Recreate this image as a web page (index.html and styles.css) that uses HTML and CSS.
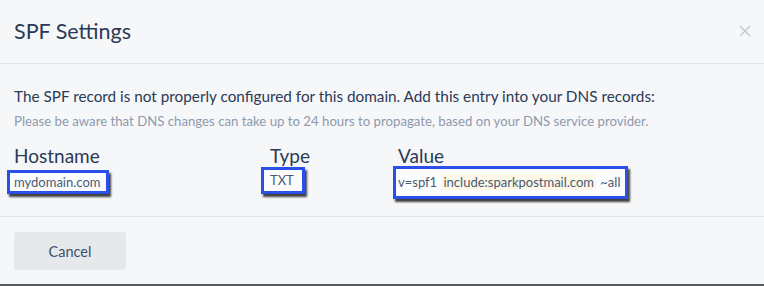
FILE: index.html
```html
<!DOCTYPE html>
<html lang="en">
<head>
    <meta charset="UTF-8">
    <title>SPF Settings</title>
    <link rel="stylesheet" href="styles.css">
</head>
<body>
    <div class="modal">
        <div class="modal-header">
            <h2>SPF Settings</h2>
            <svg class="close" width="12" height="12" viewBox="0 0 12 12">
                <path d="M1 1 L11 11 M11 1 L1 11" stroke="#c3c7cd" stroke-width="1.4" fill="none"/>
            </svg>
        </div>

        <div class="modal-body">
            <p class="intro">The SPF record is not properly configured for this domain. Add this entry into your DNS records:</p>
            <p class="note">Please be aware that DNS changes can take up to 24 hours to propagate, based on your DNS service provider.</p>

            <div class="records">
                <div class="col col-host">
                    <h3>Hostname</h3>
                    <span class="mark mark-host">mydomain.com</span>
                </div>
                <div class="col col-type">
                    <h3>Type</h3>
                    <span class="mark mark-type">TXT</span>
                </div>
                <div class="col col-value">
                    <h3>Value</h3>
                    <span class="mark mark-value">v=spf1 <span class="hl">include:sparkpostmail.com</span> ~all</span>
                </div>
            </div>
        </div>

        <div class="modal-footer">
            <button class="btn-cancel">Cancel</button>
        </div>
    </div>
</body>
</html>
```

FILE: styles.css
```css
* {
    margin: 0;
    padding: 0;
    box-sizing: border-box;
}

body {
    font-family: 'Lato', 'Open Sans', sans-serif;
    background: #f6f7f9;
    color: #2b3a55;
    width: 764px;
    height: 286px;
    overflow: hidden;
}

.modal {
    height: 286px;
    border-bottom: 2px solid #58595b;
    display: flex;
    flex-direction: column;
}

.modal-header {
    flex-shrink: 0;
    height: 64px;
    border-bottom: 1px solid #e1e4e8;
    display: flex;
    align-items: center;
    justify-content: space-between;
    padding: 0 13px 2px 14px;
}

.modal-header h2 {
    font-size: 21.5px;
    font-weight: 400;
    color: #2b3a55;
}

.modal-body {
    flex-shrink: 0;
    padding: 22px 14px 0;
    height: 153px;
    border-bottom: 1px solid #e1e4e8;
}

.intro {
    font-size: 15.3px;
    line-height: 20px;
    color: #2b3a55;
}

.note {
    font-size: 13.2px;
    line-height: 18px;
    margin-top: 6px;
    color: #8e9aaf;
}

.records {
    display: flex;
    margin-top: 15px;
}

.col {
    display: flex;
    flex-direction: column;
    align-items: flex-start;
}

.col h3 {
    font-size: 19px;
    font-weight: 400;
    line-height: 22px;
    color: #2b3a55;
}

.col-host {
    width: 256px;
}

.col-type {
    width: 128px;
}

.mark {
    display: inline-block;
    font-size: 13px;
    color: #4a5a75;
    background: #fbfcfd;
    border: 3px solid #2b50e8;
    box-shadow: 2px 3px 2px rgba(0, 0, 0, 0.75);
}

.mark-host {
    line-height: 18px;
    margin: 3px 0 0 -7px;
    padding: 0 6px 0 4px;
}

.mark-type {
    line-height: 17px;
    margin: 0 0 0 -9px;
    padding: 2px 8px 2px 6px;
}

.mark-value {
    line-height: 19px;
    margin: -1px 0 0 -5px;
    padding: 4px 5px 4px 2px;
}

.hl {
    background: #fcf7e6;
    padding: 0 2px;
    margin: 0 1px;
}

.modal-footer {
    padding: 15px 14px;
}

.btn-cancel {
    font-family: 'Lato', 'Open Sans', sans-serif;
    font-size: 14.5px;
    color: #3d4f6e;
    background: #e6e9ec;
    border: none;
    border-radius: 3px;
    width: 112px;
    height: 38px;
}
```
